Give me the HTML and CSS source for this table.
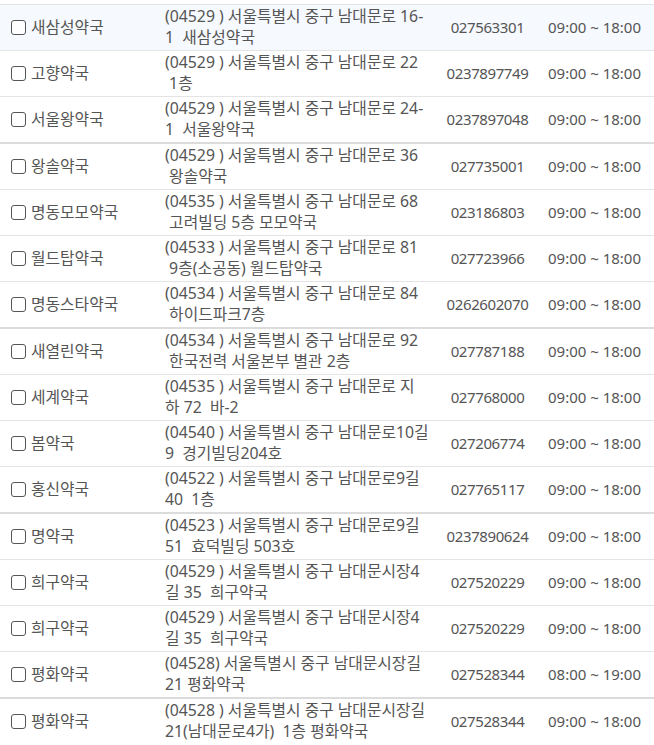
FILE: index.html
```html
<!DOCTYPE html>
<html lang="ko">
<head>
  <meta charset="UTF-8" />
  <meta name="viewport" content="width=device-width, initial-scale=1.0" />
  <title>약국 목록</title>
  <link rel="stylesheet" href="styles.css">
</head>
<body>
  <table class="pharmacy-list">
    <colgroup>
      <col class="col-name">
      <col class="col-addr">
      <col class="col-tel">
      <col class="col-time">
    </colgroup>
    <tbody>
      <tr class="active">
        <td class="name"><label><input type="checkbox"> 새삼성약국</label></td>
        <td class="addr">(04529 ) 서울특별시 중구 남대문로 16-<br>1&nbsp; 새삼성약국</td>
        <td class="tel">027563301</td>
        <td class="time">09:00 ~ 18:00</td>
      </tr>
      <tr>
        <td class="name"><label><input type="checkbox"> 고향약국</label></td>
        <td class="addr">(04529 ) 서울특별시 중구 남대문로 22<br>&nbsp;1층</td>
        <td class="tel">0237897749</td>
        <td class="time">09:00 ~ 18:00</td>
      </tr>
      <tr>
        <td class="name"><label><input type="checkbox"> 서울왕약국</label></td>
        <td class="addr">(04529 ) 서울특별시 중구 남대문로 24-<br>1&nbsp; 서울왕약국</td>
        <td class="tel">0237897048</td>
        <td class="time">09:00 ~ 18:00</td>
      </tr>
    </tbody>
    <tbody>
      <tr>
        <td class="name"><label><input type="checkbox"> 왕솔약국</label></td>
        <td class="addr">(04529 ) 서울특별시 중구 남대문로 36<br>&nbsp;왕솔약국</td>
        <td class="tel">027735001</td>
        <td class="time">09:00 ~ 18:00</td>
      </tr>
      <tr>
        <td class="name"><label><input type="checkbox"> 명동모모약국</label></td>
        <td class="addr">(04535 ) 서울특별시 중구 남대문로 68<br>&nbsp;고려빌딩 5층 모모약국</td>
        <td class="tel">023186803</td>
        <td class="time">09:00 ~ 18:00</td>
      </tr>
      <tr>
        <td class="name"><label><input type="checkbox"> 월드탑약국</label></td>
        <td class="addr">(04533 ) 서울특별시 중구 남대문로 81<br>&nbsp;9층(소공동) 월드탑약국</td>
        <td class="tel">027723966</td>
        <td class="time">09:00 ~ 18:00</td>
      </tr>
      <tr>
        <td class="name"><label><input type="checkbox"> 명동스타약국</label></td>
        <td class="addr">(04534 ) 서울특별시 중구 남대문로 84<br>&nbsp;하이드파크7층</td>
        <td class="tel">0262602070</td>
        <td class="time">09:00 ~ 18:00</td>
      </tr>
    </tbody>
    <tbody>
      <tr>
        <td class="name"><label><input type="checkbox"> 새열린약국</label></td>
        <td class="addr">(04534 ) 서울특별시 중구 남대문로 92<br>&nbsp;한국전력 서울본부 별관 2층</td>
        <td class="tel">027787188</td>
        <td class="time">09:00 ~ 18:00</td>
      </tr>
      <tr>
        <td class="name"><label><input type="checkbox"> 세계약국</label></td>
        <td class="addr">(04535 ) 서울특별시 중구 남대문로 지<br>하 72&nbsp; 바-2</td>
        <td class="tel">027768000</td>
        <td class="time">09:00 ~ 18:00</td>
      </tr>
      <tr>
        <td class="name"><label><input type="checkbox"> 봄약국</label></td>
        <td class="addr">(04540 ) 서울특별시 중구 남대문로10길<br>9&nbsp; 경기빌딩204호</td>
        <td class="tel">027206774</td>
        <td class="time">09:00 ~ 18:00</td>
      </tr>
      <tr>
        <td class="name"><label><input type="checkbox"> 홍신약국</label></td>
        <td class="addr">(04522 ) 서울특별시 중구 남대문로9길<br>40&nbsp; 1층</td>
        <td class="tel">027765117</td>
        <td class="time">09:00 ~ 18:00</td>
      </tr>
    </tbody>
    <tbody>
      <tr>
        <td class="name"><label><input type="checkbox"> 명약국</label></td>
        <td class="addr">(04523 ) 서울특별시 중구 남대문로9길<br>51&nbsp; 효덕빌딩 503호</td>
        <td class="tel">0237890624</td>
        <td class="time">09:00 ~ 18:00</td>
      </tr>
      <tr>
        <td class="name"><label><input type="checkbox"> 희구약국</label></td>
        <td class="addr">(04529 ) 서울특별시 중구 남대문시장4<br>길 35&nbsp; 희구약국</td>
        <td class="tel">027520229</td>
        <td class="time">09:00 ~ 18:00</td>
      </tr>
      <tr>
        <td class="name"><label><input type="checkbox"> 희구약국</label></td>
        <td class="addr">(04529 ) 서울특별시 중구 남대문시장4<br>길 35&nbsp; 희구약국</td>
        <td class="tel">027520229</td>
        <td class="time">09:00 ~ 18:00</td>
      </tr>
      <tr>
        <td class="name"><label><input type="checkbox"> 평화약국</label></td>
        <td class="addr">(04528) 서울특별시 중구 남대문시장길<br>21 평화약국</td>
        <td class="tel">027528344</td>
        <td class="time">08:00 ~ 19:00</td>
      </tr>
    </tbody>
    <tbody>
      <tr>
        <td class="name"><label><input type="checkbox"> 평화약국</label></td>
        <td class="addr">(04528 ) 서울특별시 중구 남대문시장길<br>21(남대문로4가)&nbsp; 1층 평화약국</td>
        <td class="tel">027528344</td>
        <td class="time">09:00 ~ 18:00</td>
      </tr>
    </tbody>
  </table>
</body>
</html>
```

FILE: styles.css
```css
body {
  font-family: "Noto Sans", "Noto Sans CJK KR", sans-serif;
  font-size: 15px;
  color: #555;
  background: #fff;
  margin: 0;
  padding-top: 4px;
}
.pharmacy-list {
  width: 654px;
  border-collapse: collapse;
  table-layout: fixed;
}
.col-name { width: 165px; }
.col-addr { width: 275px; }
.col-tel { width: 95px; }
.col-time { width: 119px; }

.pharmacy-list td {
  height: 45px;
  line-height: 21px;
  padding: 1px 0 2px;
  box-sizing: border-box;
  vertical-align: middle;
  white-space: nowrap;
  border-top: 1px solid #e4e4e4;
}
.pharmacy-list tbody + tbody tr:first-child td {
  border-top: 2px solid #dcdcdc;
}
.pharmacy-list tbody:first-child tr:first-child td {
  border-top-color: transparent;
}
.pharmacy-list tr.active td {
  background: #f6f9fe;
}

.name, .addr {
  font-size: 15.8px;
}
.name {
  padding-left: 11px !important;
}
.name label {
  display: flex;
  align-items: center;
  gap: 5px;
}
.name input {
  appearance: none;
  -webkit-appearance: none;
  width: 15px;
  height: 15px;
  margin: 0;
  border: 1.5px solid #555;
  border-radius: 3px;
  background: #fff;
  flex-shrink: 0;
}
.tel {
  text-align: center;
  letter-spacing: -0.4px;
}
.time {
  text-align: center;
}
```
